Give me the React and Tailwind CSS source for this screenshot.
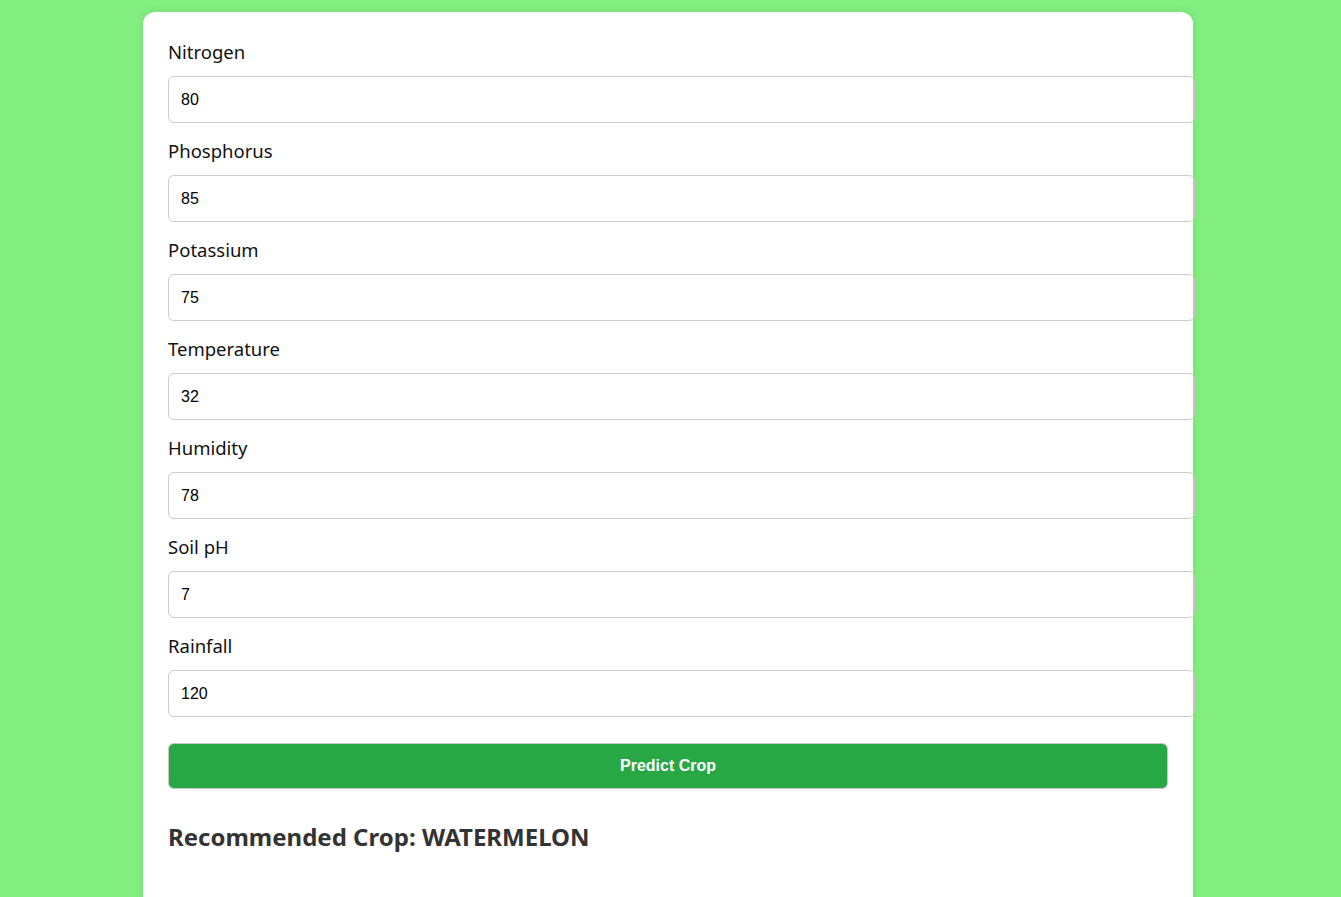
export default function App() {
  const fields = [
    ["Nitrogen", "80"],
    ["Phosphorus", "85"],
    ["Potassium", "75"],
    ["Temperature", "32"],
    ["Humidity", "78"],
    ["Soil pH", "7"],
    ["Rainfall", "120"],
  ];
  return (
    <div className="min-h-[897px] bg-[#83ef80] pt-3 pl-[143px] flex" style={{ fontFamily: '"Noto Sans", "Open Sans", sans-serif' }}>
      <div className="w-[1050px] bg-white rounded-xl shadow-[0_0_10px_rgba(0,0,0,0.1)] pt-[28px] px-[25px] pb-[40px] h-[900px]">
        {fields.map(([label, value]) => (
          <div key={label}>
            <div className="text-[18.5px] leading-[24px] text-[#111] mb-[12px]">{label}</div>
            <input
              defaultValue={value}
              className="block w-[1027px] h-[47px] px-3 border border-[#ccc] rounded-[6px] text-[16px] text-black mb-[16px] outline-none"
              style={{ fontFamily: '"Liberation Sans", Arial, sans-serif' }}
            />
          </div>
        ))}
        <button
          className="block w-[1000px] h-[46px] mt-[26px] bg-[#28a745] border border-[#c8c8c8] rounded-[6px] text-white font-bold text-[16px]"
          style={{ fontFamily: '"Liberation Sans", Arial, sans-serif' }}
        >
          Predict Crop
        </button>
        <h2 className="mt-[32px] text-[24px] font-bold text-[#333] leading-[32px]">Recommended Crop: WATERMELON</h2>
      </div>
    </div>
  );
}
